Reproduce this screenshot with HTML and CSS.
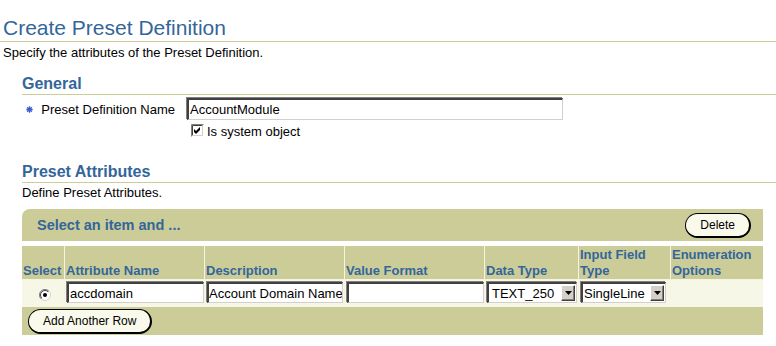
FILE: index.html
```html
<!DOCTYPE html>
<html lang="en">
<head>
<meta charset="utf-8">
<title>Create Preset Definition</title>
<link rel="stylesheet" href="styles.css">
</head>
<body>
<h1 class="page-title">Create Preset Definition</h1>
<p class="page-desc">Specify the attributes of the Preset Definition.</p>

<section class="section section-general">
  <h2 class="section-title">General</h2>
  <div class="form-grid">
    <label class="form-label" for="pname"><svg class="req" width="7" height="7" viewBox="0 0 7 7"><path d="M3.5 0.3V6.7M0.3 3.5H6.7M1.2 1.2L5.8 5.8M5.8 1.2L1.2 5.8" stroke="#3a5fd0" stroke-width="1.3" fill="none"/></svg>Preset Definition Name</label>
    <input id="pname" class="text-input main-input" type="text" value="AccountModule">
    <span class="spacer"></span>
    <label class="check-row"><span class="checkbox"><svg width="13" height="13" viewBox="0 0 13 13"><rect width="13" height="13" fill="#fff"/><path d="M0.5 12.5V0.5H12.5" stroke="#808080" fill="none"/><path d="M1.5 11.5V1.5H11.5" stroke="#404040" fill="none"/><path d="M1.5 11.5H11.5V1.5" stroke="#d4d0c8" fill="none"/><polygon points="3,5 5,7 9,3 9,6 5,10 3,8" fill="#000"/></svg></span>Is system object</label>
  </div>
</section>

<section class="section section-attrs">
  <h2 class="section-title">Preset Attributes</h2>
  <p class="section-desc">Define Preset Attributes.</p>
  <div class="container">
    <div class="container-bar">
      <span class="bar-title">Select an item and ...</span>
      <button class="btn" type="button">Delete</button>
    </div>
    <table class="grid">
      <thead>
        <tr>
          <th class="c-select">Select</th>
          <th class="c-wide">Attribute Name</th>
          <th class="c-wide">Description</th>
          <th class="c-wide">Value Format</th>
          <th class="c-dtype">Data Type</th>
          <th class="c-ftype">Input Field Type</th>
          <th class="c-enum">Enumeration Options</th>
        </tr>
      </thead>
      <tbody>
        <tr>
          <td class="cell-radio"><span class="radio"><svg width="12" height="12" viewBox="0 0 12 12"><circle cx="6" cy="6" r="5.5" fill="#fff" stroke="#d4d0c8"/><path d="M2.1 9.9A5.5 5.5 0 0 1 9.9 2.1" stroke="#808080" fill="none"/><path d="M2.8 9.2A4.5 4.5 0 0 1 9.2 2.8" stroke="#404040" fill="none"/><circle cx="6" cy="6" r="2" fill="#000"/></svg></span></td>
          <td><input class="text-input cell-input" type="text" value="accdomain"></td>
          <td><input class="text-input cell-input tight" type="text" value="Account Domain Name"></td>
          <td><input class="text-input cell-input" type="text" value=""></td>
          <td><span class="select sel-dtype"><span class="sel-text">TEXT_250</span><span class="sel-arrow"><svg width="7" height="4" viewBox="0 0 7 4"><polygon points="0,0 7,0 3.5,4" fill="#000"/></svg></span></span></td>
          <td><span class="select sel-ftype"><span class="sel-text">SingleLine</span><span class="sel-arrow"><svg width="7" height="4" viewBox="0 0 7 4"><polygon points="0,0 7,0 3.5,4" fill="#000"/></svg></span></span></td>
          <td></td>
        </tr>
      </tbody>
    </table>
    <div class="container-foot">
      <button class="btn" type="button">Add Another Row</button>
    </div>
  </div>
</section>
</body>
</html>
```

FILE: styles.css
```css
* { box-sizing: border-box; }
html, body { margin: 0; padding: 0; background: #fff; }
body {
  font-family: "Liberation Sans", Arial, sans-serif;
  font-size: 13px;
  line-height: 15px;
  color: #000;
  width: 776px;
}
.page-title {
  margin: 0;
  padding: 16px 3px 1px;
  font-size: 21px;
  line-height: 24px;
  font-weight: normal;
  color: #336699;
  border-bottom: 1px solid #cccc99;
}
.page-desc { margin: 3px 0 0; padding: 0 3px; }

.section { padding-left: 22px; }
.section-general { margin-top: 14px; }
.section-attrs { margin-top: 23px; }
.section-title {
  margin: 0;
  font-size: 16px;
  line-height: 20px;
  font-weight: bold;
  color: #336699;
  border-bottom: 1px solid #cccc99;
}
.section-desc { margin: 2px 0 0; }

.form-grid {
  display: grid;
  grid-template-columns: 153px 376px;
  column-gap: 12px;
  row-gap: 4px;
  margin-top: 3px;
}
.form-label {
  justify-self: end;
  align-self: center;
  display: flex;
  align-items: center;
}
.req { margin-right: 8px; }
.text-input {
  font-family: "Liberation Sans", Arial, sans-serif;
  font-size: 13px;
  color: #000;
  background: #fff;
  margin: 0;
  padding: 0 1px;
  border-style: solid;
  border-width: 2px 1px 1px 2px;
  border-color: #404040 #d4d0c8 #d4d0c8 #404040;
  box-shadow: -1px -1px 0 #808080;
  outline: none;
}
.main-input { width: 376px; height: 22px; }
.check-row {
  display: flex;
  align-items: flex-start;
  padding-left: 4px;
}
.checkbox { display: block; width: 13px; height: 13px; margin-right: 3px; }
.checkbox svg, .radio svg { display: block; }

.container { width: 741px; margin-top: 9px; }
.container-bar {
  height: 32px;
  background: #cccc99;
  border-top-left-radius: 8px;
  display: flex;
  align-items: center;
  justify-content: space-between;
  padding: 0 12px 0 15px;
}
.bar-title {
  font-size: 14.5px;
  line-height: 17px;
  font-weight: bold;
  color: #336699;
}
.btn {
  font-family: "Liberation Sans", Arial, sans-serif;
  font-size: 12px;
  line-height: 14px;
  color: #000;
  height: 25px;
  margin: 0;
  padding: 0 14px;
  background: #fafaec;
  border-style: solid;
  border-color: #000;
  border-width: 1px 2px 2px 1px;
  border-radius: 13px;
  cursor: pointer;
}

.grid {
  width: 741px;
  margin-top: 5px;
  border-collapse: separate;
  border-spacing: 0;
  table-layout: fixed;
}
.grid th {
  height: 33px;
  background: #cccc99;
  vertical-align: bottom;
  text-align: left;
  padding: 0 1px;
  font-size: 13px;
  line-height: 16px;
  font-weight: bold;
  color: #336699;
}
.grid th + th, .grid td + td { border-left: 1px solid #f4f4e0; }
.grid td {
  background: #f7f7e7;
  border-top: 1px solid #f4f4e0;
  vertical-align: top;
  padding: 2px 1px 3px 1px;
  height: 27px;
}
.grid td + td { padding-left: 1px; }
.c-select { width: 42px; }
.c-wide { width: 140px; }
.c-dtype { width: 94px; }
.c-ftype { width: 92px; }
.c-enum { width: 93px; }
.cell-radio { text-align: center; }
.radio { display: inline-block; margin-top: 7px; margin-left: 3px; }
.cell-input { width: 137px; height: 21px; display: block; margin-left: 1px; }
.cell-input.tight { width: 136px; padding: 0; }

.select {
  display: flex;
  align-items: center;
  height: 21px;
  margin-left: 1px;
  background: #fff;
  border-style: solid;
  border-width: 2px 1px 1px 2px;
  border-color: #404040 #d4d0c8 #d4d0c8 #404040;
  box-shadow: -1px -1px 0 #808080;
  padding-right: 1px;
}
.sel-dtype { width: 90px; }
.sel-ftype { width: 85px; }
.sel-text { flex: 1; padding-left: 3px; white-space: nowrap; overflow: hidden; }
.sel-ftype .sel-text { padding-left: 1px; }
.sel-arrow {
  width: 14px;
  height: 16px;
  background: #d4d0c8;
  border-style: solid;
  border-width: 1px;
  border-color: #fff #404040 #404040 #fff;
  box-shadow: inset -1px -1px 0 #808080;
  display: flex;
  align-items: center;
  justify-content: center;
}
.sel-arrow svg { display: block; }

.container-foot {
  background: #cccc99;
  padding: 2px 0 1px 6px;
}
```
